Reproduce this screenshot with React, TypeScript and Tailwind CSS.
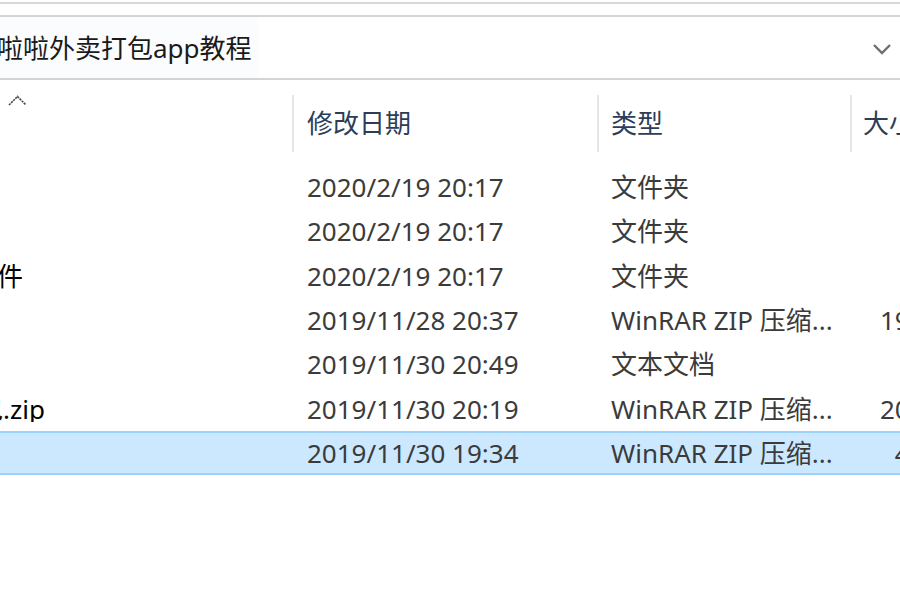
import React from "react";

const rows = [
  { name: "", nameOffset: 0, date: "2020/2/19 20:17", type: "文件夹", size: "" },
  { name: "", nameOffset: 0, date: "2020/2/19 20:17", type: "文件夹", size: "" },
  { name: "素材文件", nameOffset: -81, date: "2020/2/19 20:17", type: "文件夹", size: "" },
  { name: "", nameOffset: 0, date: "2019/11/28 20:37", type: "WinRAR ZIP 压缩...", size: "19,542 KB" },
  { name: "", nameOffset: 0, date: "2019/11/30 20:49", type: "文本文档", size: "" },
  { name: "源码安装包.zip", nameOffset: -127, date: "2019/11/30 20:19", type: "WinRAR ZIP 压缩...", size: "20,318 KB" },
  { name: "", nameOffset: 0, date: "2019/11/30 19:34", type: "WinRAR ZIP 压缩...", size: "4,126 KB", selected: true },
];

const font = { fontFamily: '"Noto Sans", "Noto Sans CJK SC", sans-serif' };

const App = () => {
  return (
    <div className="w-[900px] h-[600px] overflow-hidden bg-white" style={font}>
      {/* top edge lines */}
      <div className="mt-[2px] h-[2px] bg-[#d9d9d9]" />
      <div className="mt-[11px] h-[2px] bg-[#d4d4d4]" />

      {/* address bar */}
      <div className="h-[61px] flex items-center justify-between">
        <div className="h-full w-[258px] bg-[#fafcfe] flex items-center overflow-hidden">
          <span className="ml-[-3px] text-[26px] text-[#1a1a1a] whitespace-nowrap leading-none">啦啦外卖打包app教程</span>
        </div>
        <svg width="20" height="12" viewBox="0 0 20 12" className="mr-[8px] mt-[2px]">
          <polyline points="2,2 10,10 18,2" fill="none" stroke="#6e6e6e" strokeWidth="2.4" />
        </svg>
      </div>
      <div className="h-[2px] bg-[#d4d4d4]" />

      {/* column header */}
      <div className="h-[85px] w-[1050px] grid grid-cols-[292px_305px_253px_200px]">
        <div className="pt-[15px] pl-[8px]">
          <svg width="19" height="11" viewBox="0 0 19 11">
            <polyline points="1,10 9.5,1.5 18,10" fill="none" stroke="#4a4a4a" strokeWidth="1.6" strokeDasharray="2.2 0.8" />
          </svg>
        </div>
        <div className="mt-[15px] h-[57px] border-l-2 border-[#e6e6e6] pl-[13px] flex items-center text-[26px] text-[#2d3d58]">修改日期</div>
        <div className="mt-[15px] h-[57px] border-l-2 border-[#e6e6e6] pl-[12px] flex items-center text-[26px] text-[#2d3d58]">类型</div>
        <div className="mt-[15px] h-[57px] border-l-2 border-[#e6e6e6] pl-[11px] flex items-center text-[26px] text-[#2d3d58]">大小</div>
      </div>

      {/* rows */}
      <div className="flex flex-col">
        {rows.map((r, i) => (
          <div
            key={i}
            className={
              r.selected
                ? "h-[44.33px] w-[1050px] grid grid-cols-[292px_305px_253px_200px] items-center text-[26px] bg-[#cce8ff] border-y-2 border-[#99d1ff]"
                : "h-[44.33px] w-[1050px] grid grid-cols-[292px_305px_253px_200px] items-center text-[26px]"
            }
          >
            <div className="overflow-hidden whitespace-nowrap text-black leading-none">
              {r.name && <span className="inline-block" style={{ marginLeft: r.nameOffset }}>{r.name}</span>}
            </div>
            <div className="pl-[15px] text-[#3b3b3b] whitespace-nowrap leading-none">{r.date}</div>
            <div className="pl-[14px] text-[#3b3b3b] whitespace-nowrap leading-none">{r.type}</div>
            <div className="text-right pr-[49px] text-[#3b3b3b] whitespace-nowrap leading-none">{r.size}</div>
          </div>
        ))}
      </div>
    </div>
  );
};

export default App;
